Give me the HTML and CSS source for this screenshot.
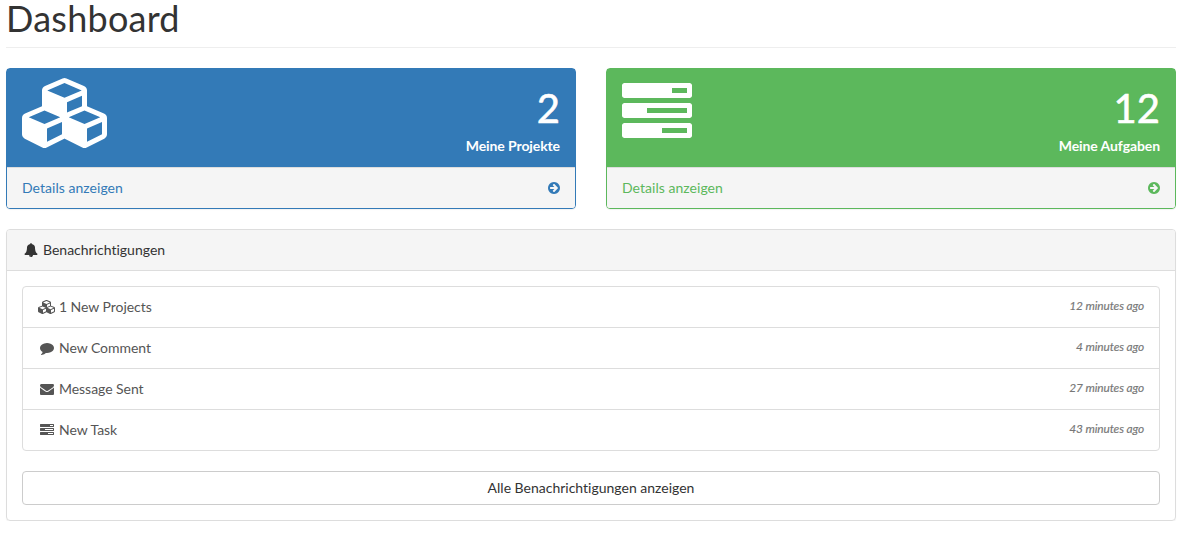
FILE: index.html
```html
<!DOCTYPE html>
<html lang="de">
<head>
<meta charset="utf-8">
<title>Dashboard</title>
<link rel="stylesheet" href="styles.css">
</head>
<body>
<svg class="sprite" aria-hidden="true">
  <symbol id="cubes" viewBox="0 0 2176 1792"><path d="M640 1632l384-192v-314l-384 164v342zm-64-454l404-173-404-173-404 173zm1088 454l384-192v-314l-384 164v342zm-64-454l404-173-404-173-404 173zm-448-293l384-165v-266l-384 164v267zm-64-379l441-189-441-189-441 189zm1088 518v416q0 36-19 67t-52 47l-448 224q-25 14-57 14t-57-14l-448-224q-4-2-7-4-2 2-7 4l-448 224q-25 14-57 14t-57-14l-448-224q-33-16-52-47t-19-67v-416q0-38 21.500-70t56.500-48l434-186v-400q0-38 21.500-70t56.500-48l448-192q23-10 50-10t50 10l448 192q35 16 56.500 48t21.500 70v400l434 186q36 16 57 48t21 70z"/></symbol>
  <symbol id="tasks" viewBox="0 0 1792 1792"><path d="M1024 1408h640v-128h-640v128zm-384-512h1024v-128h-1024v128zm640-512h384v-128h-384v128zm512 832v256q0 26-19 45t-45 19h-1664q-26 0-45-19t-19-45v-256q0-26 19-45t45-19h1664q26 0 45 19t19 45zm0-512v256q0 26-19 45t-45 19h-1664q-26 0-45-19t-19-45v-256q0-26 19-45t45-19h1664q26 0 45 19t19 45zm0-512v256q0 26-19 45t-45 19h-1664q-26 0-45-19t-19-45v-256q0-26 19-45t45-19h1664q26 0 45 19t19 45z"/></symbol>
  <symbol id="arrow" viewBox="128 0 1536 1792"><path d="M1413 896q0-27-18-45l-91-91-362-362q-18-18-45-18t-45 18l-91 91q-18 18-18 45t18 45l189 189h-502q-26 0-45 19t-19 45v128q0 26 19 45t45 19h502l-189 189q-18 18-18 45t18 45l91 91q18 18 45 18t45-18l362-362 91-91q18-18 18-45zm251 0q0 209-103 385.500t-279.500 279.500-385.500 103-385.500-103-279.500-279.500-103-385.500 103-385.500 279.500-279.500 385.500-103 385.500 103 279.500 279.500 103 385.500z"/></symbol>
  <symbol id="bell" viewBox="0 0 1792 1792"><path d="M912 1696q0-16-16-16-59 0-101.500-42.500t-42.500-101.500q0-16-16-16t-16 16q0 73 51.500 124.500t124.500 51.500q16 0 16-16zm816-288q0 52-38 90t-90 38h-448q0 106-75 181t-181 75-181-75-75-181h-448q-52 0-90-38t-38-90q50-42 91-88t85-119.500 74.500-158.500 50-206 19.500-260q0-152 117-282.500t307-158.500q-8-19-8-39 0-40 28-68t68-28 68 28 28 68q0 20-8 39 190 28 307 158.500t117 282.500q0 139 19.500 260t50 206 74.500 158.500 85 119.500 91 88z"/></symbol>
  <symbol id="comment" viewBox="0 0 1792 1792"><path d="M1792 896q0 174-120 321.500t-326 233-450 85.500q-70 0-145-8-198 175-460 242-49 14-114 22-17 2-30.500-9t-17.500-29v-1q-3-4-.5-12t2-10 4.500-9.500l6-9 7-8.500 8-9q7-8 31-34.500t34.500-38 31-39.500 32.500-51 27-59 26-76q-157-89-247.500-220t-90.500-281q0-130 71-248.500t191-204.500 286-136.500 348-50.500q244 0 450 85.500t326 233 120 321.500z"/></symbol>
  <symbol id="envelope" viewBox="0 0 1792 1792"><path d="M1792 710v794q0 66-47 113t-113 47h-1472q-66 0-113-47t-47-113v-794q44 49 101 87 362 246 497 345 57 42 92.500 65.500t94.500 48 110 24.500h2q51 0 110-24.500t94.500-48 92.500-65.500q170-123 498-345 57-39 100-87zm0-294q0 79-49 151t-122 123q-376 261-468 325-10 7-42.500 31t-54 38.500-52 32.500-57.500 27-50 9h-2q-23 0-50-9t-57.500-27-52-32.500-54-38.500-42.500-31q-91-64-262-182.500t-205-142.500q-62-42-117-115.500t-55-136.500q0-78 41.500-130t118.500-52h1472q65 0 112.500 47t47.500 113z"/></symbol>
</svg>

<main class="page">
  <h1 class="page-header">Dashboard</h1>

  <div class="tiles">
    <section class="tile tile-blue">
      <div class="tile-head">
        <svg class="tile-icon tile-icon-wide"><use href="#cubes"/></svg>
        <div class="tile-info">
          <div class="huge">2</div>
          <div class="label">Meine Projekte</div>
        </div>
      </div>
      <a class="tile-foot"><span>Details anzeigen</span><svg class="arrow"><use href="#arrow"/></svg></a>
    </section>
    <section class="tile tile-green">
      <div class="tile-head">
        <svg class="tile-icon"><use href="#tasks"/></svg>
        <div class="tile-info">
          <div class="huge">12</div>
          <div class="label">Meine Aufgaben</div>
        </div>
      </div>
      <a class="tile-foot"><span>Details anzeigen</span><svg class="arrow"><use href="#arrow"/></svg></a>
    </section>
  </div>

  <section class="panel">
    <div class="panel-head"><svg class="icon"><use href="#bell"/></svg><span>Benachrichtigungen</span></div>
    <div class="panel-body">
      <div class="list">
        <a class="item"><svg class="icon icon-wide"><use href="#cubes"/></svg><span>1 New Projects</span><em class="time">12 minutes ago</em></a>
        <a class="item"><svg class="icon"><use href="#comment"/></svg><span>New Comment</span><em class="time">4 minutes ago</em></a>
        <a class="item"><svg class="icon"><use href="#envelope"/></svg><span>Message Sent</span><em class="time">27 minutes ago</em></a>
        <a class="item"><svg class="icon"><use href="#tasks"/></svg><span>New Task</span><em class="time">43 minutes ago</em></a>
      </div>
      <a class="button">Alle Benachrichtigungen anzeigen</a>
    </div>
  </section>
</main>
</body>
</html>
```
FILE: styles.css
```css
* { box-sizing: border-box; }

body {
  margin: 0;
  background: #fff;
  color: #333;
  font: 14px/20px Lato, "Open Sans", sans-serif;
  font-variant-ligatures: none;
}

.sprite { display: none; }

svg { fill: currentColor; flex: none; }

.page { padding: 0 6px; }

.page-header {
  margin: 0 0 20px;
  height: 48px;
  border-bottom: 1px solid #eee;
  font-size: 36px;
  font-weight: 400;
  line-height: 36px;
  letter-spacing: .25px;
}

.tiles {
  display: grid;
  grid-template-columns: 1fr 1fr;
  gap: 30px;
  margin-bottom: 20px;
}

.tile {
  border: 1px solid currentColor;
  border-radius: 4px;
  box-shadow: 0 1px 1px rgba(0, 0, 0, .05);
}

.tile-blue { color: #337ab7; }
.tile-green { color: #5cb85c; }

.tile-head {
  display: flex;
  justify-content: space-between;
  height: 98px;
  padding: 9px 15px 10px;
  background: currentColor;
}

.tile-icon { width: 70px; height: 70px; color: #fff; }
.tile-icon-wide { width: 85px; }

.tile-info { padding-top: 1px; color: #fff; text-align: right; }
.huge { font-size: 40px; line-height: 58px; -webkit-text-stroke: .6px #fff; }
.label {
  margin-top: -1px;
  font-weight: 700;
  letter-spacing: -.1px;
}

.tile-foot {
  display: flex;
  align-items: center;
  justify-content: space-between;
  height: 41px;
  padding: 0 15px;
  border-top: 1px solid #ddd;
  border-radius: 0 0 3px 3px;
  background: #f5f5f5;
}

.tile-foot span { letter-spacing: .04px; }

.arrow { width: 12px; height: 14px; }

.panel {
  border: 1px solid #ddd;
  border-radius: 4px;
  box-shadow: 0 1px 1px rgba(0, 0, 0, .05);
}

.panel-head {
  display: flex;
  align-items: center;
  gap: 3px;
  height: 41px;
  padding: 0 15px;
  border-bottom: 1px solid #ddd;
  border-radius: 3px 3px 0 0;
  background: #f5f5f5;
}

.icon { width: 18px; height: 14px; }
.icon-wide { width: 17px; margin-right: 1px; }

.panel-body { padding: 15px; }

.list {
  margin-bottom: 20px;
  border: 1px solid #ddd;
  border-radius: 4px;
}

.item {
  display: flex;
  align-items: center;
  gap: 3px;
  height: 41px;
  padding: 0 15px;
  border-bottom: 1px solid #ddd;
  color: #555;
  letter-spacing: -.04px;
}

.item:last-child { height: 40px; border-bottom: 0; }

.time {
  margin-left: auto;
  padding-bottom: 2px;
  color: #777;
  font-size: 11.9px;
  letter-spacing: -.12px;
  -webkit-text-stroke: .15px currentColor;
}

.button {
  display: block;
  height: 34px;
  border: 1px solid #ccc;
  border-radius: 4px;
  line-height: 32px;
  text-align: center;
}
```
